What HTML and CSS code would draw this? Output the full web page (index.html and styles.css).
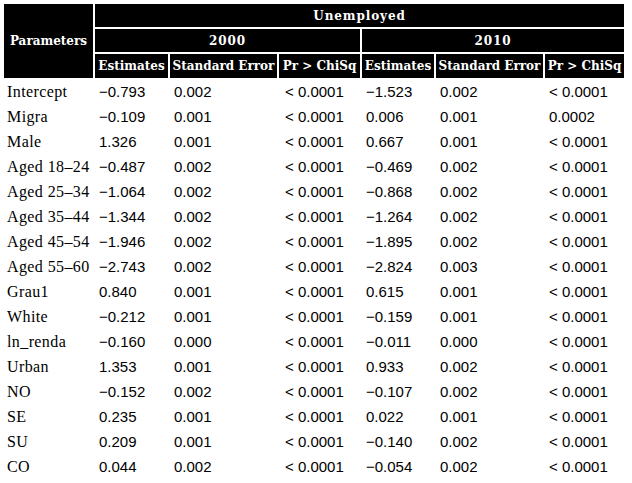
FILE: index.html
```html
<!DOCTYPE html>
<html>
<head>
<meta charset="utf-8">
<link rel="stylesheet" href="styles.css">
</head>
<body>
<table class="stats">
  <colgroup>
    <col class="c-param">
    <col class="c-est">
    <col class="c-se">
    <col class="c-pr">
    <col class="c-est2">
    <col class="c-se">
    <col class="c-pr2">
  </colgroup>
  <thead>
    <tr class="h1">
      <th rowspan="3">Parameters</th>
      <th colspan="6" class="wide">Unemployed</th>
    </tr>
    <tr class="h2">
      <th colspan="3" class="wide">2000</th>
      <th colspan="3" class="wide">2010</th>
    </tr>
    <tr class="h3">
      <th>Estimates</th>
      <th>Standard Error</th>
      <th>Pr &gt; ChiSq</th>
      <th>Estimates</th>
      <th>Standard Error</th>
      <th>Pr &gt; ChiSq</th>
    </tr>
  </thead>
  <tbody>
    <tr><td class="lbl">Intercept</td><td>−0.793</td><td>0.002</td><td class="pr">&lt; 0.0001</td><td>−1.523</td><td>0.002</td><td>&lt; 0.0001</td></tr>
    <tr><td class="lbl">Migra</td><td>−0.109</td><td>0.001</td><td class="pr">&lt; 0.0001</td><td>0.006</td><td>0.001</td><td>0.0002</td></tr>
    <tr><td class="lbl">Male</td><td>1.326</td><td>0.001</td><td class="pr">&lt; 0.0001</td><td>0.667</td><td>0.001</td><td>&lt; 0.0001</td></tr>
    <tr><td class="lbl">Aged 18–24</td><td>−0.487</td><td>0.002</td><td class="pr">&lt; 0.0001</td><td>−0.469</td><td>0.002</td><td>&lt; 0.0001</td></tr>
    <tr><td class="lbl">Aged 25–34</td><td>−1.064</td><td>0.002</td><td class="pr">&lt; 0.0001</td><td>−0.868</td><td>0.002</td><td>&lt; 0.0001</td></tr>
    <tr><td class="lbl">Aged 35–44</td><td>−1.344</td><td>0.002</td><td class="pr">&lt; 0.0001</td><td>−1.264</td><td>0.002</td><td>&lt; 0.0001</td></tr>
    <tr><td class="lbl">Aged 45–54</td><td>−1.946</td><td>0.002</td><td class="pr">&lt; 0.0001</td><td>−1.895</td><td>0.002</td><td>&lt; 0.0001</td></tr>
    <tr><td class="lbl">Aged 55–60</td><td>−2.743</td><td>0.002</td><td class="pr">&lt; 0.0001</td><td>−2.824</td><td>0.003</td><td>&lt; 0.0001</td></tr>
    <tr><td class="lbl">Grau1</td><td>0.840</td><td>0.001</td><td class="pr">&lt; 0.0001</td><td>0.615</td><td>0.001</td><td>&lt; 0.0001</td></tr>
    <tr><td class="lbl">White</td><td>−0.212</td><td>0.001</td><td class="pr">&lt; 0.0001</td><td>−0.159</td><td>0.001</td><td>&lt; 0.0001</td></tr>
    <tr><td class="lbl">ln_renda</td><td>−0.160</td><td>0.000</td><td class="pr">&lt; 0.0001</td><td>−0.011</td><td>0.000</td><td>&lt; 0.0001</td></tr>
    <tr><td class="lbl">Urban</td><td>1.353</td><td>0.001</td><td class="pr">&lt; 0.0001</td><td>0.933</td><td>0.002</td><td>&lt; 0.0001</td></tr>
    <tr><td class="lbl">NO</td><td>−0.152</td><td>0.002</td><td class="pr">&lt; 0.0001</td><td>−0.107</td><td>0.002</td><td>&lt; 0.0001</td></tr>
    <tr><td class="lbl">SE</td><td>0.235</td><td>0.001</td><td class="pr">&lt; 0.0001</td><td>0.022</td><td>0.001</td><td>&lt; 0.0001</td></tr>
    <tr><td class="lbl">SU</td><td>0.209</td><td>0.001</td><td class="pr">&lt; 0.0001</td><td>−0.140</td><td>0.002</td><td>&lt; 0.0001</td></tr>
    <tr><td class="lbl">CO</td><td>0.044</td><td>0.002</td><td class="pr">&lt; 0.0001</td><td>−0.054</td><td>0.002</td><td>&lt; 0.0001</td></tr>
  </tbody>
</table>
</body>
</html>
```

FILE: styles.css
```css
html, body {
  margin: 0;
  padding: 0;
  background: #ffffff;
}

.stats {
  margin: 2px;
  width: 624px;
  table-layout: fixed;
  border-collapse: separate;
  border-spacing: 2px;
  color: #000000;
}

.c-param { width: 89px; }
.c-est { width: 73px; }
.c-se { width: 107px; }
.c-pr { width: 81px; }
.c-est2 { width: 72px; }
.c-pr2 { width: 79px; }

.stats th {
  background: #000000;
  color: #ffffff;
  font-family: "DejaVu Serif", serif;
  font-weight: bold;
  font-size: 12px;
  text-align: center;
  vertical-align: middle;
  padding: 0;
  white-space: nowrap;
  overflow: hidden;
}

.stats th.wide {
  letter-spacing: 0.9px;
}

.h1 th, .h2 th { height: 23px; }
.h3 th { height: 24px; }

.stats td {
  height: 23px;
  padding: 0 0 0 4px;
  font-family: "Liberation Sans", Arial, sans-serif;
  font-size: 15px;
  text-align: left;
  vertical-align: middle;
  white-space: nowrap;
  overflow: hidden;
}

.stats td.lbl {
  font-family: "Liberation Serif", serif;
  font-size: 16px;
  letter-spacing: 0.4px;
  padding-left: 3px;
}

.stats td.pr {
  padding-left: 6px;
}
```
